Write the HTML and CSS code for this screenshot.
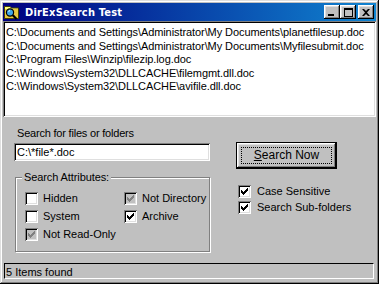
FILE: index.html
```html
<!DOCTYPE html>
<html lang="en">
<head>
    <meta charset="UTF-8">
    <title>DirExSearch Test</title>
    <link rel="stylesheet" href="styles.css">
</head>
<body>
    <div class="window">
        <div class="titlebar">
            <svg class="app-icon" width="16" height="16" viewBox="0 0 16 16">
                <path d="M0.5 2.5 H6 L7.5 4 H14.5 V14.5 H0.5 Z" fill="#ffff80" stroke="#404000" stroke-width="1"/>
                <path d="M1 5 H14 V14 H1 Z" fill="#e8c840"/>
                <circle cx="6" cy="8.5" r="3.6" fill="#40a8e8" stroke="#000" stroke-width="1.2"/>
                <path d="M4.5 7.5 L6 6.5" stroke="#fff" stroke-width="1"/>
                <path d="M8.6 11 L12.5 15" stroke="#000" stroke-width="2.2"/>
            </svg>
            <span class="title">DirExSearch Test</span>
            <div class="caption-btns">
                <div class="cap-btn">
                    <svg width="8" height="8" viewBox="0 0 8 8"><rect x="0" y="6" width="6" height="2" fill="#000"/></svg>
                </div>
                <div class="cap-btn">
                    <svg width="9" height="9" viewBox="0 0 9 9"><path d="M0 0 H9 V9 H0 Z M1 2 V8 H8 V2 Z" fill="#000" fill-rule="evenodd"/></svg>
                </div>
                <div class="cap-btn close">
                    <svg width="8" height="7" viewBox="0 0 8 7"><path d="M0 0 H2 L4 2 L6 0 H8 L5 3.5 L8 7 H6 L4 5 L2 7 H0 L3 3.5 Z" fill="#000"/></svg>
                </div>
            </div>
        </div>

        <div class="results">
            <div class="result">C:\Documents and Settings\Administrator\My Documents\planetfilesup.doc</div>
            <div class="result">C:\Documents and Settings\Administrator\My Documents\Myfilesubmit.doc</div>
            <div class="result">C:\Program Files\Winzip\filezip.log.doc</div>
            <div class="result">C:\Windows\System32\DLLCACHE\filemgmt.dll.doc</div>
            <div class="result">C:\Windows\System32\DLLCACHE\avifile.dll.doc</div>
        </div>

        <div class="form">
            <div class="left-col">
                <div class="field-label">Search for files or folders</div>
                <div class="textbox">C:\*file*.doc</div>
                <fieldset class="group">
                    <legend>Search Attributes:</legend>
                    <div class="attr-grid">
                        <div class="check"><span class="box"></span>Hidden</div>
                        <div class="check"><span class="box disabled"><svg width="7" height="7" viewBox="0 0 7 7"><path d="M0 2 H1 V3 H2 V4 H3 V3 H4 V2 H5 V1 H6 V0 H7 V3 H6 V4 H5 V5 H4 V6 H3 V7 H2 V6 H1 V5 H0 Z" fill="#808080"/></svg></span>Not Directory</div>
                        <div class="check"><span class="box"></span>System</div>
                        <div class="check"><span class="box"><svg width="7" height="7" viewBox="0 0 7 7"><path d="M0 2 H1 V3 H2 V4 H3 V3 H4 V2 H5 V1 H6 V0 H7 V3 H6 V4 H5 V5 H4 V6 H3 V7 H2 V6 H1 V5 H0 Z" fill="#000"/></svg></span>Archive</div>
                        <div class="check"><span class="box disabled"><svg width="7" height="7" viewBox="0 0 7 7"><path d="M0 2 H1 V3 H2 V4 H3 V3 H4 V2 H5 V1 H6 V0 H7 V3 H6 V4 H5 V5 H4 V6 H3 V7 H2 V6 H1 V5 H0 Z" fill="#808080"/></svg></span>Not Read-Only</div>
                    </div>
                </fieldset>
            </div>
            <div class="right-col">
                <div class="default-btn"><span class="focus-rect"><u>S</u>earch Now</span></div>
                <div class="options">
                    <div class="check"><span class="box"><svg width="7" height="7" viewBox="0 0 7 7"><path d="M0 2 H1 V3 H2 V4 H3 V3 H4 V2 H5 V1 H6 V0 H7 V3 H6 V4 H5 V5 H4 V6 H3 V7 H2 V6 H1 V5 H0 Z" fill="#000"/></svg></span>Case Sensitive</div>
                    <div class="check"><span class="box"><svg width="7" height="7" viewBox="0 0 7 7"><path d="M0 2 H1 V3 H2 V4 H3 V3 H4 V2 H5 V1 H6 V0 H7 V3 H6 V4 H5 V5 H4 V6 H3 V7 H2 V6 H1 V5 H0 Z" fill="#000"/></svg></span>Search Sub-folders</div>
                </div>
            </div>
        </div>

        <div class="statusbar">
            <div class="status-field">5 Items found</div>
        </div>
    </div>
</body>
</html>
```

FILE: styles.css
```css
body {
    margin: 0;
    padding: 0;
    background-color: #c0c0c0;
    font-family: "Liberation Sans", Arial, sans-serif;
    font-size: 11px;
    line-height: 13px;
    color: #000;
}

.window {
    width: 379px;
    height: 284px;
    box-sizing: border-box;
    padding: 3px;
    display: flex;
    flex-direction: column;
    background-color: #c0c0c0;
    box-shadow: inset -1px -1px #000, inset 1px 1px #dfdfdf,
                inset -2px -2px #808080, inset 2px 2px #fff;
}

/* title bar */
.titlebar {
    height: 18px;
    display: flex;
    align-items: center;
    padding: 0 2px 0 1px;
    background: linear-gradient(to right, #000080, #1084d0);
    color: #fff;
}

.app-icon {
    flex: none;
    margin-right: 5px;
}

.title {
    font-family: "DejaVu Sans Condensed", "DejaVu Sans", sans-serif;
    font-weight: bold;
    font-size: 11px;
    letter-spacing: 0.2px;
    flex: 1;
}

.caption-btns {
    display: flex;
}

.cap-btn {
    width: 16px;
    height: 14px;
    box-sizing: border-box;
    display: flex;
    align-items: center;
    justify-content: center;
    background-color: #c0c0c0;
    box-shadow: inset -1px -1px #000, inset 1px 1px #fff,
                inset -2px -2px #808080, inset 2px 2px #dfdfdf;
}

.cap-btn.close {
    margin-left: 2px;
}

/* results list */
.results {
    height: 96px;
    box-sizing: border-box;
    padding: 5px 3px 0;
    background-color: #fff;
    box-shadow: inset 1px 1px #808080, inset -1px -1px #fff,
                inset 2px 2px #000, inset -2px -2px #dfdfdf;
    white-space: nowrap;
    overflow: hidden;
    letter-spacing: -0.08px;
    line-height: 13.5px;
}

/* search form */
.form {
    flex: 1;
    display: flex;
    padding-left: 11px;
}

.left-col {
    width: 196px;
}

.field-label {
    margin-top: 10px;
    padding-left: 3px;
    letter-spacing: -0.2px;
}

.textbox {
    margin-top: 3px;
    height: 18px;
    box-sizing: border-box;
    padding: 3px 3px 0;
    background-color: #fff;
    box-shadow: inset 1px 1px #808080, inset -1px -1px #fff,
                inset 2px 2px #000, inset -2px -2px #dfdfdf;
}

.group {
    margin: 10px 0 0 1px;
    padding: 8px 0 10px 9px;
    border: 1px solid #808080;
    box-shadow: inset 1px 1px #fff, 1px 1px #fff;
}

.group legend {
    margin-left: -3px;
    padding: 0 2px;
    background-color: #c0c0c0;
    letter-spacing: -0.1px;
}

.attr-grid {
    display: grid;
    grid-template-columns: 99px 1fr;
    row-gap: 5px;
}

.check {
    display: flex;
    align-items: center;
    height: 13px;
    white-space: nowrap;
}

.box {
    width: 13px;
    height: 13px;
    box-sizing: border-box;
    flex: none;
    display: flex;
    align-items: center;
    justify-content: center;
    margin-right: 5px;
    background-color: #fff;
    box-shadow: inset 1px 1px #808080, inset -1px -1px #fff,
                inset 2px 2px #000, inset -2px -2px #dfdfdf;
}

.box.disabled {
    background-color: #c0c0c0;
}

.right-col {
    margin-left: 26px;
}

.default-btn {
    margin-top: 25px;
    width: 101px;
    height: 27px;
    box-sizing: border-box;
    padding: 4px;
    display: flex;
    border: 1px solid #000;
    box-shadow: inset -1px -1px #000, inset 1px 1px #fff,
                inset -2px -2px #808080, inset 2px 2px #dfdfdf;
}

.focus-rect {
    flex: 1;
    display: flex;
    align-items: center;
    justify-content: center;
    border: 1px dotted #000;
    font-size: 12px;
}

.options {
    margin: 16px 0 0 2px;
    display: flex;
    flex-direction: column;
    gap: 3px;
}

.options .box {
    margin-right: 6px;
}

/* status bar */
.statusbar {
    padding: 0 2px 2px 1px;
}

.status-field {
    height: 16px;
    box-sizing: border-box;
    padding: 2px 0 0 1px;
    border-top: 1px solid #000;
    border-left: 1px solid #000;
    border-right: 1px solid #fff;
    border-bottom: 1px solid #fff;
}
```
